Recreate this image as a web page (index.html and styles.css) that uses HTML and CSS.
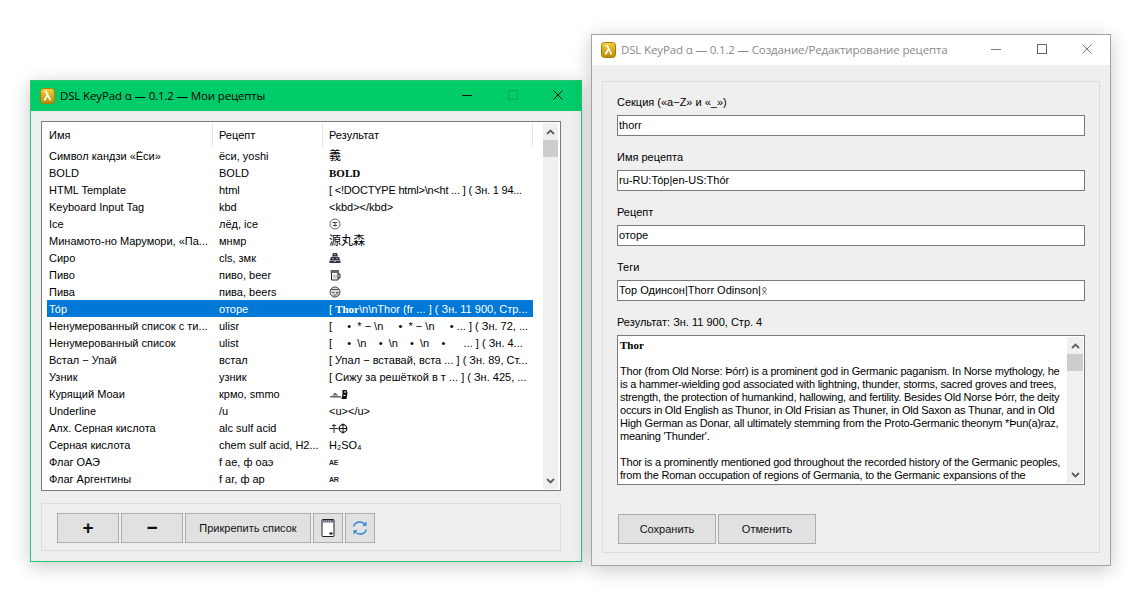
FILE: index.html
```html
<!DOCTYPE html>
<html lang="ru">
<head>
    <meta charset="UTF-8">
    <meta name="viewport" content="width=device-width, initial-scale=1.0">
    <title>DSL KeyPad</title>
    <link rel="stylesheet" href="styles.css">
</head>
<body>
    <svg class="defs" width="0" height="0">
        <defs>
            <linearGradient id="gold" x1="0" y1="0" x2="0" y2="1">
                <stop offset="0" stop-color="#f7d23c"/>
                <stop offset="1" stop-color="#b88a06"/>
            </linearGradient>
            <symbol id="logo" viewBox="0 0 15 16">
                <rect x="0.5" y="0.5" width="14" height="15" rx="3" fill="url(#gold)" stroke="#a67c10"/>
                <path d="M4.5 3.500h1.600L10.500 12.500M7.600 7L4.300 12.500" fill="none" stroke="#fff" stroke-width="1.700"/>
            </symbol>
            <symbol id="chev-up" viewBox="0 0 9 6">
                <path d="M1 5l3.500-3.500L8 5" fill="none" stroke="#606060" stroke-width="1.800"/>
            </symbol>
            <symbol id="chev-down" viewBox="0 0 9 6">
                <path d="M1 1l3.500 3.500L8 1" fill="none" stroke="#606060" stroke-width="1.800"/>
            </symbol>
        </defs>
    </svg>

    <!-- main window -->
    <section class="window window-main">
        <header class="titlebar">
            <svg class="app-icon"><use href="#logo"/></svg>
            <span class="title">DSL KeyPad α — 0.1.2 — Мои рецепты</span>
            <div class="controls">
                <svg class="ctl" viewBox="0 0 10 10"><path d="M0 5.500h10" stroke="#111"/></svg>
                <svg class="ctl" viewBox="0 0 10 10"><rect x="0.500" y="0.500" width="9" height="9" fill="none" stroke="#10a659"/></svg>
                <svg class="ctl" viewBox="0 0 10 10"><path d="M0.500 0.500l9 9M9.500 0.500l-9 9" stroke="#111"/></svg>
            </div>
        </header>
        <div class="window-body">
            <div class="list">
                <div class="list-main">
                    <div class="list-head">
                        <span>Имя</span>
                        <span>Рецепт</span>
                        <span>Результат</span>
                    </div>
                    <div class="row"><span>Символ кандзи «Ёси»</span><span>ёси, yoshi</span><span class="cjk">義</span></div>
                    <div class="row"><span>BOLD</span><span>BOLD</span><span class="serif-bold">BOLD</span></div>
                    <div class="row"><span>HTML Template</span><span>html</span><span class="tight">[ &lt;!DOCTYPE html&gt;\n&lt;ht ... ] ( Зн. 1 94...</span></div>
                    <div class="row"><span>Keyboard Input Tag</span><span>kbd</span><span>&lt;kbd&gt;&lt;/kbd&gt;</span></div>
                    <div class="row"><span>Ice</span><span>лёд, ice</span><span>
                        <svg class="glyph" viewBox="0 0 12 12"><circle cx="6" cy="6" r="5" fill="none" stroke="#666"/><path d="M3.500 4.500h5M6 4.500v4M4 7.500h4" stroke="#444" fill="none"/></svg>
                    </span></div>
                    <div class="row"><span>Минамото-но Марумори, «Па...</span><span>мнмр</span><span class="cjk">源丸森</span></div>
                    <div class="row"><span>Сиро</span><span>cls, змк</span><span>
                        <svg class="glyph" viewBox="0 0 12 12"><path d="M4 1h4l1 3.500H3zM2 5h8l1 3H1zM0.500 8.500h11V11H0.500z" fill="#334"/><path d="M5.500 2.500h1M3.500 6.500h1M7.500 6.500h1M5.500 9.500h1" stroke="#fff"/></svg>
                    </span></div>
                    <div class="row"><span>Пиво</span><span>пиво, beer</span><span>
                        <svg class="glyph" viewBox="0 0 12 12"><path d="M2.500 3h6.500v8H2.500zM9 5h2v4H9" fill="none" stroke="#222"/><path d="M1.500 1h8.500v3H1.500z" fill="#666"/><path d="M5 5.500v4M7 5.500v4" stroke="#999"/></svg>
                    </span></div>
                    <div class="row"><span>Пива</span><span>пива, beers</span><span>
                        <svg class="glyph" viewBox="0 0 12 12"><circle cx="6" cy="6" r="5" fill="#ddd" stroke="#444"/><path d="M2 3.500h8M3 6.500h2.500M7 6.500h2.500M4.500 9h3" stroke="#555" fill="none"/><path d="M7.500 7l2.500 2.500" stroke="#a55"/></svg>
                    </span></div>
                    <div class="row selected"><span>То́р</span><span>оторе</span><span>[ <b class="serif-bold">Thor</b>\n\nThor (fr ... ] ( Зн. 11 900, Стр...</span></div>
                    <div class="row"><span>Ненумерованный список с ти...</span><span>ulisr</span><span class="pre">[     •  * − \n     •  * − \n     • ... ] ( Зн. 72, ...</span></div>
                    <div class="row"><span>Ненумерованный список</span><span>ulist</span><span class="pre">[     •  \n    •  \n    •  \n    •      ... ] ( Зн. 4...</span></div>
                    <div class="row"><span>Встал − Упай</span><span>встал</span><span>[ Упал − вставай, вста ... ] ( Зн. 89, Ст...</span></div>
                    <div class="row"><span>Узник</span><span>узник</span><span>[ Сижу за решёткой в т ... ] ( Зн. 425, ...</span></div>
                    <div class="row"><span>Курящий Моаи</span><span>крмо, smmo</span><span>
                        <svg class="glyph glyph-wide" viewBox="0 0 20 12"><path d="M1 8h11v1.500H1zM3 7.500l3-3 3.500 3" fill="#666"/><path d="M13.500 2h4l1 3-1 6h-5l1-5z" fill="#111"/><path d="M15 4h2M14.500 7.500h2" stroke="#fff"/></svg>
                    </span></div>
                    <div class="row"><span>Underline</span><span>/u</span><span>&lt;u&gt;&lt;/u&gt;</span></div>
                    <div class="row"><span>Алх. Серная кислота</span><span>alc sulf acid</span><span>
                        <svg class="glyph glyph-wide" viewBox="0 0 20 12"><path d="M0.500 6.500h9M5 2v9M3 3.500h4" stroke="#333" fill="none"/><circle cx="14" cy="6.500" r="3.800" fill="none" stroke="#111" stroke-width="1.200"/><path d="M14 1.500v10M10.500 6.500h7" stroke="#111"/></svg>
                    </span></div>
                    <div class="row"><span>Серная кислота</span><span>chem sulf acid, H2...</span><span>H₂SO₄</span></div>
                    <div class="row"><span>Флаг ОАЭ</span><span>f ae, ф оаэ</span><span class="tiny">AE</span></div>
                    <div class="row"><span>Флаг Аргентины</span><span>f ar, ф ар</span><span class="tiny">AR</span></div>
                </div>
                <div class="scrollbar list-scroll">
                    <div class="arrow"><svg class="chev"><use href="#chev-up"/></svg></div>
                    <div class="thumb"></div>
                    <div class="track"></div>
                    <div class="arrow"><svg class="chev"><use href="#chev-down"/></svg></div>
                </div>
            </div>
            <div class="toolbar">
                <button class="btn btn-sign">+</button>
                <button class="btn btn-sign">−</button>
                <button class="btn btn-pin">Прикрепить список</button>
                <button class="btn btn-icon">
                    <svg width="14" height="18" viewBox="0 0 14 18">
                        <rect x="1" y="0.500" width="12" height="17" rx="1" fill="#fff" stroke="#1a1a2a"/>
                        <path d="M1.500 1h11v2.500h-11z" fill="#667"/>
                        <path d="M3 2h1M5 2h1M7 2h1M9 2h1" stroke="#ccd"/>
                        <path d="M8.500 14.500h3" stroke="#111" stroke-width="2"/>
                    </svg>
                </button>
                <button class="btn btn-icon">
                    <svg width="16" height="16" viewBox="0 0 16 16">
                        <path d="M1.500 6.500C2.500 3.500 5 2 8 2c2.500 0 4 1 5 2.500" fill="none" stroke="#2a84d8" stroke-width="1.300"/>
                        <path d="M14.500 1.500v4.200h-4.200z" fill="#2a84d8"/>
                        <path d="M14.500 9.500C13.500 12.500 11 14 8 14c-2.500 0-4-1-5-2.500" fill="none" stroke="#2a84d8" stroke-width="1.300"/>
                        <path d="M1.500 14.500v-4.200h4.200z" fill="#2a84d8"/>
                    </svg>
                </button>
            </div>
        </div>
    </section>

    <!-- recipe editor -->
    <section class="window window-edit">
        <header class="titlebar">
            <svg class="app-icon"><use href="#logo"/></svg>
            <span class="title">DSL KeyPad α — 0.1.2 — Создание/Редактирование рецепта</span>
            <div class="controls">
                <svg class="ctl" viewBox="0 0 10 10"><path d="M0 5.500h10" stroke="#777"/></svg>
                <svg class="ctl" viewBox="0 0 10 10"><rect x="0.500" y="0.500" width="9" height="9" fill="none" stroke="#666"/></svg>
                <svg class="ctl" viewBox="0 0 10 10"><path d="M0.500 0.500l9 9M9.500 0.500l-9 9" stroke="#777"/></svg>
            </div>
        </header>
        <div class="window-body">
            <form class="edit-panel">
                <label class="field-label">Секция («a−Z» и «_»)</label>
                <div class="input">thorr</div>
                <label class="field-label">Имя рецепта</label>
                <div class="input">ru-RU:То́р|en-US:Thór</div>
                <label class="field-label">Рецепт</label>
                <div class="input">оторе</div>
                <label class="field-label">Теги</label>
                <div class="input">Тор Одинсон|Thorr Odinson|ᛟ</div>
                <label class="field-label">Результат: Зн. 11 900, Стр. 4</label>
                <div class="result">
                    <div class="result-text">
                        <p class="serif-bold">Thor</p>
                        <br>
                        <p>Thor (from Old Norse: Þórr) is a prominent god in Germanic paganism. In Norse mythology, he</p>
                        <p>is a hammer-wielding god associated with lightning, thunder, storms, sacred groves and trees,</p>
                        <p>strength, the protection of humankind, hallowing, and fertility. Besides Old Norse Þórr, the deity</p>
                        <p>occurs in Old English as Thunor, in Old Frisian as Thuner, in Old Saxon as Thunar, and in Old</p>
                        <p>High German as Donar, all ultimately stemming from the Proto-Germanic theonym *Þun(a)raz,</p>
                        <p>meaning 'Thunder'.</p>
                        <br>
                        <p>Thor is a prominently mentioned god throughout the recorded history of the Germanic peoples,</p>
                        <p>from the Roman occupation of regions of Germania, to the Germanic expansions of the</p>
                    </div>
                    <div class="scrollbar">
                        <div class="arrow"><svg class="chev"><use href="#chev-up"/></svg></div>
                        <div class="thumb"></div>
                        <div class="track"></div>
                        <div class="arrow"><svg class="chev"><use href="#chev-down"/></svg></div>
                    </div>
                </div>
                <div class="form-buttons">
                    <button type="button" class="btn btn-form">Сохранить</button>
                    <button type="button" class="btn btn-form">Отменить</button>
                </div>
            </form>
        </div>
    </section>
</body>
</html>
```

FILE: styles.css
```css
* {
    box-sizing: border-box;
}
html, body {
    height: 100%;
}
body {
    margin: 0;
    background-color: #fff;
    font-family: "Liberation Sans", Arial, sans-serif;
    font-size: 11px;
    line-height: 13px;
    color: #000;
    overflow: hidden;
}
.defs {
    position: absolute;
}
.window {
    position: absolute;
    display: flex;
    flex-direction: column;
    background-color: #efefef;
    box-shadow: 0 4px 18px rgba(0, 0, 0, 0.22);
}
.window-main {
    left: 30px;
    top: 80px;
    width: 552px;
    height: 482px;
    border: 1px solid #29c277;
}
.window-edit {
    left: 591px;
    top: 34px;
    width: 520px;
    height: 532px;
    border: 1px solid #a4a4a4;
}
.titlebar {
    display: flex;
    align-items: center;
    height: 30px;
    flex-shrink: 0;
    padding-left: 9px;
    font-family: "Open Sans", sans-serif;
    font-size: 11.5px;
}
.window-main .titlebar {
    background-color: #00cc6a;
}
.window-edit .titlebar {
    background-color: #fff;
    color: #8a8a8a;
}
.app-icon {
    width: 15px;
    height: 16px;
    margin-right: 5px;
}
.title {
    flex: 1;
    margin-bottom: 2px;
    letter-spacing: -0.14px;
}
.controls {
    display: flex;
    gap: 35.5px;
    padding: 0 18px 2px 0;
}
.ctl {
    width: 10px;
    height: 10px;
}
.window-body {
    flex: 1;
    padding: 10px;
}

/* recipe list */
.list {
    display: flex;
    width: 520px;
    height: 370px;
    background-color: #fff;
    border: 1px solid #7a7a7a;
}
.list-main {
    width: 501px;
    padding: 1px 0 0 5px;
}
.list-head, .row {
    display: grid;
    grid-template-columns: 166px 110px 210px;
    width: 486px;
    white-space: nowrap;
}
.list-head {
    height: 24px;
    align-items: stretch;
}
.list-head span {
    padding: 6px 0 0 2px;
    border-right: 1px solid #e5e5e5;
}
.list-head span + span {
    padding-left: 6px;
}
.row {
    height: 17px;
    line-height: 19px;
}
.row span {
    padding-left: 2px;
    overflow: hidden;
}
.row span + span {
    padding-left: 6px;
}
.row.selected {
    background-color: #0078d7;
    color: #fff;
}
.pre {
    white-space: pre;
}
.tight {
    letter-spacing: -0.2px;
}
.cjk {
    font-family: "Liberation Sans", "Noto Sans CJK JP", sans-serif;
    font-size: 12px;
}
.serif-bold {
    font-family: "Liberation Serif", serif;
    font-weight: bold;
}
.tiny {
    font-size: 7px;
    font-weight: bold;
    letter-spacing: -0.3px;
    color: #223;
}
.glyph {
    width: 12px;
    height: 12px;
    vertical-align: -2px;
}
.glyph-wide {
    width: 20px;
}

/* scrollbars */
.scrollbar {
    display: flex;
    flex-direction: column;
    flex-shrink: 0;
    width: 16px;
    background-color: #f0f0f0;
}
.list-scroll {
    margin: 1px 2px 1px 0;
    width: 15px;
}
.arrow {
    display: flex;
    align-items: center;
    justify-content: center;
    height: 17px;
}
.thumb {
    height: 17px;
    background-color: #cdcdcd;
}
.track {
    flex: 1;
}
.chev {
    width: 9px;
    height: 6px;
}

/* bottom toolbar */
.toolbar {
    display: flex;
    gap: 2px;
    width: 520px;
    height: 48px;
    margin-top: 12px;
    padding: 9px 15px;
    border: 1px solid #dcdcdc;
}
.btn {
    display: flex;
    align-items: center;
    justify-content: center;
    height: 30px;
    padding: 0;
    background-color: #e1e1e1;
    border: 1px solid #adadad;
    color: #111;
    font-family: "Liberation Sans", Arial, sans-serif;
    font-size: 11px;
}
.btn-sign {
    width: 62px;
    font-size: 19px;
    font-weight: bold;
}
.btn-pin {
    width: 126px;
}
.btn-icon {
    width: 30px;
}

/* edit form */
.window-edit .window-body {
    padding: 16px 10px 12px;
}
.edit-panel {
    display: flex;
    flex-direction: column;
    width: 498px;
    height: 472px;
    padding: 14px 14px 0;
    border: 1px solid #dcdcdc;
}
.field-label {
    flex-shrink: 0;
    height: 13px;
    margin-bottom: 6px;
}
.input {
    flex-shrink: 0;
    height: 21px;
    margin-bottom: 15px;
    padding: 3px 1px;
    background-color: #fff;
    border: 1px solid #7a7a7a;
    white-space: nowrap;
}
.result {
    display: flex;
    flex-shrink: 0;
    height: 150px;
    padding-right: 1px;
    background-color: #fff;
    border: 1px solid #7a7a7a;
}
.result-text {
    flex: 1;
    min-width: 0;
    padding: 3px 0 0 2px;
    letter-spacing: -0.22px;
    white-space: nowrap;
    overflow: hidden;
}
.result-text p {
    margin: 0;
}
.result-text .serif-bold {
    letter-spacing: 0;
}
.result .scrollbar {
    margin: 1px 0;
}
.form-buttons {
    display: flex;
    flex-shrink: 0;
    gap: 2px;
    margin: 29px 0 0 1px;
}
.btn-form {
    width: 98px;
}
```
